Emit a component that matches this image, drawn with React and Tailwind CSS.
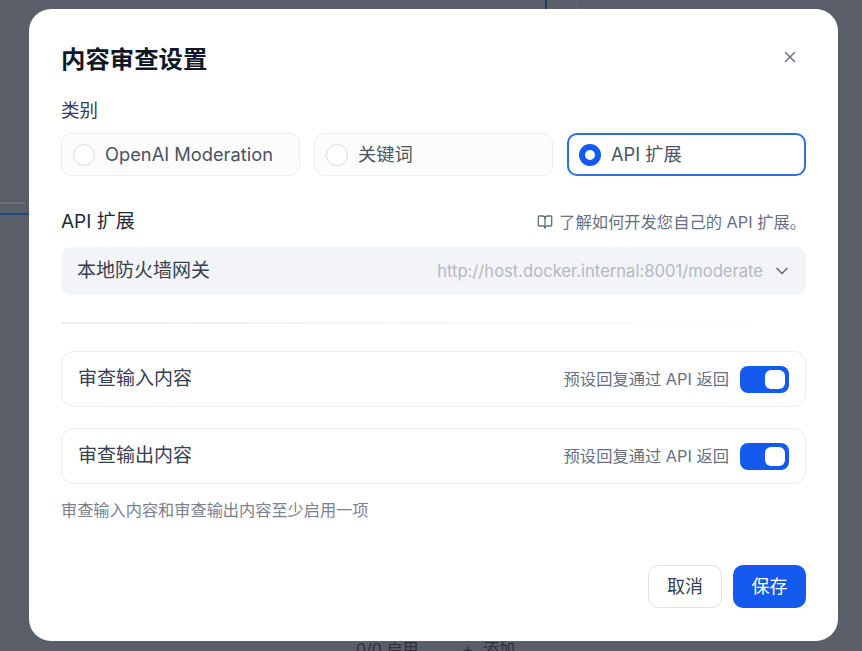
import { BookOpen, ChevronDown, X } from 'lucide-react';

const categories = [
  { label: 'OpenAI Moderation', active: false },
  { label: '关键词', active: false },
  { label: 'API 扩展', active: true },
];

const rows = ['审查输入内容', '审查输出内容'];

function Radio({ label, active }) {
  return (
    <div className={`flex h-[43px] items-center rounded-[10px] ${active ? 'border-[2px] border-[#2f6fdc] bg-white pl-[10px]' : 'border border-[#eceef1] bg-[#fcfcfd] pl-[11px]'}`}>
      {active ? (
        <span className="h-[22px] w-[22px] rounded-full border-[6px] border-[#155aef] bg-white" />
      ) : (
        <span className="h-[22px] w-[22px] rounded-full border border-[#d8dbe0] bg-white" />
      )}
      <span className="ml-[10px] text-[18.3px] text-[#495464]">{label}</span>
    </div>
  );
}

function Toggle() {
  return (
    <div className="flex h-[27px] w-[49px] items-center justify-end rounded-[8px] bg-[#155aef] pr-[4px]">
      <span className="h-[19px] w-[20px] rounded-[6px] bg-white" />
    </div>
  );
}

export default function App() {
  return (
    <div className="relative flex h-[651px] w-[862px] items-start overflow-hidden bg-[#5a5e68] pl-[29px] pt-[9px] font-['Inter','Noto_Sans_CJK_SC',sans-serif]">
      {/* page behind the overlay */}
      <div className="absolute left-[545px] top-0 h-[9px] w-[2px] bg-[#1d3a78]" />
      <div className="absolute left-[577px] top-0 h-[9px] w-px bg-[#666a74]" />
      <div className="absolute left-0 top-[202px] h-[2px] w-[25px] bg-[#6c7079]" />
      <div className="absolute left-0 top-[213px] h-[2px] w-[29px] bg-[#1d4a80]" />
      <div className="absolute left-[356px] top-[638px] flex gap-[44px] text-[16px] leading-[22px] text-[#2c303a]">
        <span>0/0 启用</span>
        <span className="flex gap-[10px]">
          <span>+</span>
          <span>添加</span>
        </span>
      </div>

      <div className="relative flex h-[632px] w-[809px] flex-col rounded-[22px] bg-white px-[32px]">
        <div className="flex items-center justify-between pt-[32px]">
          <h1 className="text-[24.4px] font-bold leading-[36px] text-[#101828]">内容审查设置</h1>
          <X size={18} className="mr-[7px] mt-[-4px] text-[#676f83]" />
        </div>
        <div className="mt-[20px] text-[18.5px] leading-[26px] text-[#354052]">类别</div>

        <div className="mt-[10px] grid grid-cols-3 gap-[14px]">
          {categories.map((c) => (
            <Radio key={c.label} {...c} />
          ))}
        </div>

        <div className="mt-[33px] flex h-[26px] items-center justify-between">
          <span className="text-[19px] text-[#1f2937]">API 扩展</span>
          <span className="flex items-center gap-[6px] text-[16.3px] text-[#676f83]">
            <BookOpen size={16} />
            了解如何开发您自己的 API 扩展。
          </span>
        </div>

        <div className="mt-[12px] flex h-[48px] items-center justify-between rounded-[10px] bg-[#f2f4f7] pl-[16px] pr-[14px]">
          <span className="text-[19px] text-[#354052]">本地防火墙网关</span>
          <span className="flex items-center gap-[9px]">
            <span className="text-[16.6px] text-[#b4b9c2]">http://host.docker.internal:8001/moderate</span>
            <ChevronDown size={20} className="text-[#676f83]" />
          </span>
        </div>

        <div className="mt-[27px] h-[2px] bg-gradient-to-r from-[#eceef1] to-white" />

        <div className="mt-[27px] flex flex-col gap-[21px]">
          {rows.map((r) => (
            <div key={r} className="flex h-[56px] items-center justify-between rounded-[12px] border border-[#eceef1] px-[16px]">
              <span className="pt-[1px] text-[19px] text-[#354052]">{r}</span>
              <span className="flex items-center gap-[11px]">
                <span className="text-[16.3px] text-[#676f83]">预设回复通过 API 返回</span>
                <Toggle />
              </span>
            </div>
          ))}
        </div>

        <p className="mt-[15px] text-[16.2px] leading-[22px] text-[#7a8190]">审查输入内容和审查输出内容至少启用一项</p>

        <div className="mt-[44px] flex justify-end gap-[11px]">
          <button className="h-[43px] w-[74px] rounded-[10px] border border-[#dfe1e6] bg-white text-[18px] text-[#354052]">取消</button>
          <button className="h-[43px] w-[73px] rounded-[10px] bg-[#155aef] text-[18px] text-white">保存</button>
        </div>
      </div>
    </div>
  );
}
